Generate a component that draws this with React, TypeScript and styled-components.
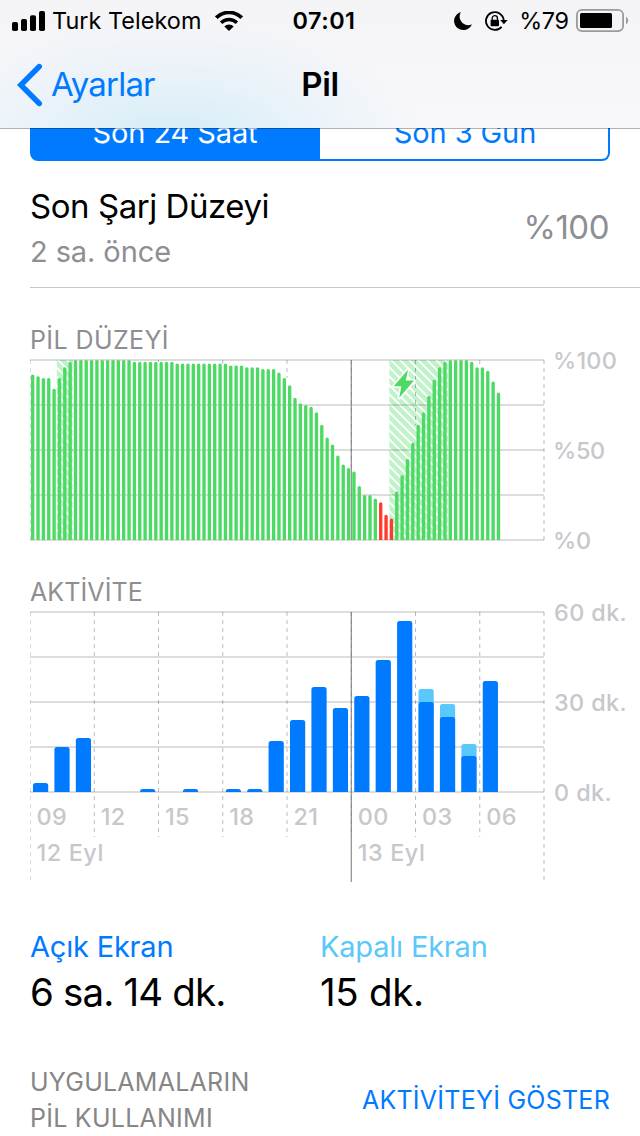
import React from "react";
import styled, { createGlobalStyle } from "styled-components";

const BLUE = "#007aff";
const SKY = "#5ac8fa";
const GREEN = "#4cd964";
const RED = "#ff3b30";

const GlobalStyle = createGlobalStyle`
  * { box-sizing: border-box; }
  body {
    margin: 0;
    background: #fff;
    font-family: Inter, "Liberation Sans", sans-serif;
    font-kerning: normal;
  }
`;

const Screen = styled.main`
  width: 640px;
  height: 1136px;
  overflow: hidden;
  background: #fff;
  color: #000;
`;

interface TextProps {
  $size: number;
  $line: number;
  $spacing?: number;
  $weight?: number;
  $color?: string;
}

const Text = styled.span<TextProps>`
  display: block;
  white-space: nowrap;
  font-size: ${(p) => p.$size}px;
  line-height: ${(p) => p.$line}px;
  letter-spacing: ${(p) => p.$spacing ?? 0}px;
  font-weight: ${(p) => p.$weight ?? 400};
  color: ${(p) => p.$color ?? "inherit"};
`;

const AxisLabel = styled.span<{ $spacing?: number }>`
  display: block;
  white-space: nowrap;
  font-size: 23.4px;
  line-height: 30px;
  font-weight: 500;
  letter-spacing: ${(p) => p.$spacing ?? 0.2}px;
  color: #c7c7cc;
`;

const Header = styled.header`
  position: relative;
  z-index: 1;
  height: 128px;
  background:
    radial-gradient(ellipse 260px 120px at 170px 140px, rgba(205, 234, 247, 0.85), rgba(220, 238, 249, 0.5) 55%, rgba(247, 247, 249, 0) 100%),
    linear-gradient(#f4f4f7, #f8f8fa);
  box-shadow: 0 1px 0 rgba(0, 0, 0, 0.3);
`;

const StatusBar = styled.div`
  display: grid;
  grid-template-columns: 1fr auto 1fr;
  align-items: center;
  height: 41px;
  padding: 0 11px 0 12px;
`;

const StatusGroup = styled.div<{ $end?: boolean }>`
  display: flex;
  align-items: center;
  justify-content: ${(p) => (p.$end ? "flex-end" : "flex-start")};
`;

const Clock = styled(Text)`
  padding-left: 7px;
`;

const Gap = styled.span<{ $w: number }>`
  flex: none;
  width: ${(p) => p.$w}px;
`;

const NavBar = styled.nav`
  display: grid;
  grid-template-columns: 1fr auto 1fr;
  align-items: center;
  height: 87px;
  padding: 0 17px;
`;

const BackButton = styled.a`
  display: flex;
  align-items: center;
  gap: 8px;
  color: ${BLUE};
`;

const Segments = styled.div`
  display: flex;
  align-items: flex-end;
  height: 33px;
  margin: 0 30px;
  overflow: hidden;
`;

const Segment = styled.button<{ $active?: boolean }>`
  flex: none;
  width: 290px;
  height: 58px;
  padding: 1px 0 0 ${(p) => (p.$active ? 0 : 2)}px;
  font: inherit;
  border: 2px solid ${BLUE};
  border-radius: ${(p) => (p.$active ? "8px 0 0 8px" : "0 8px 8px 0")};
  border-left-width: ${(p) => (p.$active ? 2 : 0)}px;
  background: ${(p) => (p.$active ? BLUE : "#fff")};
  color: ${(p) => (p.$active ? "#fff" : BLUE)};
  text-align: center;
`;

const ChargeRow = styled.section`
  display: flex;
  align-items: center;
  justify-content: space-between;
  height: 127px;
  margin-left: 30px;
  padding: 6px 31px 0 0;
  border-bottom: 1px solid #c8c7cc;
`;

const ChargeInfo = styled.div`
  padding-top: 3px;
`;

const ChartSection = styled.section<{ $top: number }>`
  padding: ${(p) => p.$top}px 0 0 30px;
`;

const ChartBody = styled.div`
  display: flex;
`;

const Chart = styled.svg`
  display: block;
  flex: none;
  margin-top: 4px;
  overflow: hidden;
`;

const Axis = styled.div<{ $left: number }>`
  display: flex;
  flex-direction: column;
  gap: 60px;
  margin: -9px 0 0 ${(p) => p.$left}px;
`;

const Hours = styled.div`
  display: grid;
  grid-template-columns: repeat(8, 64.25px);
  height: 36px;
  margin: -81px 0 0 6.5px;
`;

const Dates = styled.div`
  display: grid;
  grid-template-columns: 321.25px auto;
  height: 36px;
  margin-left: 6.5px;
`;

const Totals = styled.section`
  display: grid;
  grid-template-columns: 290px 290px;
  padding: 51px 30px 0;
`;

const Footer = styled.footer`
  display: flex;
  align-items: center;
  justify-content: space-between;
  padding: 48px 30px 0;
`;

const repeat = (value: number, count: number): number[] => Array(count).fill(value);

const batteryLevels: number[] = [
  92, 91, 90, 90, 84, 90, 96, 99,
  ...repeat(100, 11),
  ...repeat(99, 8),
  ...repeat(98, 10),
  97, 97, 97, 96, 96, 96, 95, 95, 95, 93, 90, 86, 79, 76, 75, 74, 71, 64, 57, 53,
  47, 42, 40, 38, 30, 25, 25, 23, 21, 14, 12, 27, 36, 45, 54, 64, 71, 80, 89, 96,
  99, 100, 100, 100, 100, 99, 96, 96, 94, 88, 82,
];

const activity: { hour: number; on: number; off?: number }[] = [
  { hour: 0, on: 3 },
  { hour: 1, on: 15 },
  { hour: 2, on: 18 },
  { hour: 5, on: 1 },
  { hour: 7, on: 1 },
  { hour: 9, on: 1 },
  { hour: 10, on: 1 },
  { hour: 11, on: 17 },
  { hour: 12, on: 24 },
  { hour: 13, on: 35 },
  { hour: 14, on: 28 },
  { hour: 15, on: 32 },
  { hour: 16, on: 44 },
  { hour: 17, on: 57 },
  { hour: 18, on: 30, off: 4.3 },
  { hour: 19, on: 25, off: 4.3 },
  { hour: 20, on: 12, off: 4 },
  { hour: 21, on: 37 },
];

const HOUR = 514 / 24;
const QUARTER = HOUR / 4;
const GRID = "rgba(0,0,0,0.27)";

const topRounded = (x: number, y: number, w: number, bottom: number, r: number) => {
  const k = Math.min(r, bottom - y, w / 2);
  return `M${x} ${bottom}V${y + k}a${k} ${k} 0 0 1 ${k} ${-k}h${w - 2 * k}a${k} ${k} 0 0 1 ${k} ${k}V${bottom}z`;
};

function Grid({ lineEnds, midnightEnd }: { lineEnds: number[]; midnightEnd: number }) {
  return (
    <g stroke={GRID} strokeWidth={1}>
      {[1, 46, 91, 136, 181].map((y) => (
        <line key={y} x1={0} x2={514} y1={y} y2={y} />
      ))}
      {lineEnds.map((end, i) => (
        <line key={i} x1={i * 3 * HOUR} x2={i * 3 * HOUR} y1={1} y2={end} strokeDasharray="4 4" />
      ))}
      <line x1={15 * HOUR} x2={15 * HOUR} y1={1} y2={midnightEnd} stroke="#777" />
    </g>
  );
}

function BatteryChart() {
  return (
    <Chart width={515} height={182} viewBox="0 0 515 182">
      <defs>
        <pattern id="hatch" width="9" height="9" patternUnits="userSpaceOnUse">
          <rect width="9" height="9" fill="#c0f3c9" />
          <path d="M-4.5 -4.5L13.5 13.5M-4.5 4.5L4.5 13.5M4.5 -4.5L13.5 4.5" stroke="#fff" strokeWidth={1.9} />
        </pattern>
      </defs>
      <rect x={5 * QUARTER} y={1} width={3 * QUARTER} height={180} fill="url(#hatch)" />
      <rect x={67 * QUARTER + 0.6} y={1} width={11 * QUARTER} height={180} fill="url(#hatch)" />
      <Grid lineEnds={[181, 1, 3, 5, 19, 110, 66, 6, 181]} midnightEnd={181} />
      {batteryLevels.map((level, i) => (
        <path
          key={i}
          d={topRounded(i * QUARTER + 1, 181 - level * 1.8, QUARTER - 2, 181, 1.6)}
          fill={i >= 65 && i <= 67 ? RED : GREEN}
        />
      ))}
      <path
        d="M378 10.5L363.8 27.3H371.3L369.3 38.8L384 21.6H375.8z"
        fill={GREEN}
        stroke="#fff"
        strokeWidth={3.4}
        strokeLinejoin="round"
        paintOrder="stroke"
      />
    </Chart>
  );
}

function ActivityChart() {
  return (
    <Chart width={515} height={272} viewBox="0 0 515 272">
      <Grid lineEnds={[270, 226, 226, 226, 226, 226, 226, 226, 270]} midnightEnd={271} />
      {activity.map(({ hour, on, off }) => {
        const x = hour * HOUR + 3;
        return (
          <g key={hour}>
            {off && <path d={topRounded(x, 181 - (on + off) * 3, HOUR - 6.2, 181, 2.5)} fill={SKY} />}
            <path d={topRounded(x, 181 - on * 3, HOUR - 6.2, 181, 2.5)} fill={BLUE} />
          </g>
        );
      })}
    </Chart>
  );
}

const SignalIcon = () => (
  <svg width="33" height="20" viewBox="0 0 33 20">
    <rect x="0" y="11" width="6" height="9" rx="1.8" />
    <rect x="9" y="8" width="6" height="12" rx="1.8" />
    <rect x="18" y="4.3" width="6" height="15.7" rx="1.8" />
    <rect x="27" y="0" width="6" height="20" rx="1.8" />
  </svg>
);

const WifiIcon = () => (
  <svg width="28" height="20" viewBox="0 0 28 20">
    <path d="M14 20L9.3 15.4A6.7 6.7 0 0 1 18.7 15.4z" />
    <path d="M6.1 11.8A11 11 0 0 1 21.9 11.8" fill="none" stroke="#000" strokeWidth="3.4" />
    <path d="M1.3 6.7A18 18 0 0 1 26.7 6.7" fill="none" stroke="#000" strokeWidth="3.8" />
  </svg>
);

const MoonIcon = () => (
  <svg width="18" height="18" viewBox="0 0 18 18">
    <path d="M6.8 0C1.9 2 -0.6 6.4 0.3 10.8C1.3 15.2 4.8 18 9.3 18C13.1 18 16.4 15.9 17.9 12.2C14.6 13.9 11 13.3 8.3 10.8C5.4 8 4.8 3.8 6.8 0z" />
  </svg>
);

const RotationLockIcon = () => (
  <svg width="23" height="20" viewBox="0 0 23 20">
    <path d="M18.7 9A8.9 8.9 0 1 0 16.6 15.8" fill="none" stroke="#000" strokeWidth="1.8" />
    <path d="M15.2 9H22.600L18.900 13.300z" />
    <rect x="5.6" y="8.800" width="8.400" height="6.400" rx="0.9" />
    <path d="M7.2 9.200V7.200a2.600 2.600 0 0 1 5.200 0V9.200" fill="none" stroke="#000" strokeWidth="1.3" />
  </svg>
);

const BatteryIcon = () => (
  <svg width="53" height="23" viewBox="0 0 53 23">
    <rect x="0.9" y="0.9" width="46.2" height="21.2" rx="5" fill="none" stroke="#9a9a9c" strokeWidth="1.8" />
    <rect x="4" y="4" width="32" height="15" rx="1.5" />
    <path d="M50 7.8a4.2 4.2 0 0 1 0 7.4z" fill="#9a9a9c" />
  </svg>
);

const BackChevron = () => (
  <svg width="26" height="44" viewBox="0 0 26 44">
    <path d="M22.3 3.5L3.8 22L22.3 40.5" fill="none" stroke={BLUE} strokeWidth="5.4" strokeLinecap="round" />
  </svg>
);

export default function App() {
  return (
    <Screen>
      <GlobalStyle />
      <Header>
        <StatusBar>
          <StatusGroup>
            <SignalIcon />
            <Gap $w={7} />
            <Text $size={23.4} $line={41} $spacing={0.05}>Turk Telekom</Text>
            <Gap $w={14} />
            <WifiIcon />
          </StatusGroup>
          <Clock $size={23.4} $line={41} $weight={600} $spacing={0.5}>07:01</Clock>
          <StatusGroup $end>
            <MoonIcon />
            <Gap $w={13} />
            <RotationLockIcon />
            <Gap $w={11.5} />
            <Text $size={23.4} $line={41} $spacing={-0.4}>%79</Text>
            <Gap $w={7.5} />
            <BatteryIcon />
          </StatusGroup>
        </StatusBar>
        <NavBar>
          <BackButton>
            <BackChevron />
            <Text $size={33} $line={87} $spacing={-0.8}>Ayarlar</Text>
          </BackButton>
          <Text $size={33} $line={87} $weight={600} $spacing={-0.4}>Pil</Text>
        </NavBar>
      </Header>

      <Segments>
        <Segment $active>
          <Text $size={29} $line={54} $spacing={-0.1}>Son 24 Saat</Text>
        </Segment>
        <Segment>
          <Text $size={29} $line={54} $spacing={-0.1}>Son 3 Gün</Text>
        </Segment>
      </Segments>

      <ChargeRow>
        <ChargeInfo>
          <Text $size={33} $line={46} $spacing={-0.45}>Son Şarj Düzeyi</Text>
          <Text $size={29} $line={45} $color="#8e8e93" $spacing={-0.1}>2 sa. önce</Text>
        </ChargeInfo>
        <Text $size={33} $line={46} $color="#8e8e93" $spacing={-0.5}>%100</Text>
      </ChargeRow>

      <ChartSection $top={37}>
        <Text $size={25} $line={30} $color="#8e8e93" $spacing={0.4}>PİL DÜZEYİ</Text>
        <ChartBody>
          <BatteryChart />
          <Axis $left={8}>
            <AxisLabel>%100</AxisLabel>
            <AxisLabel $spacing={-0.3}>%50</AxisLabel>
            <AxisLabel $spacing={-0.3}>%0</AxisLabel>
          </Axis>
        </ChartBody>
      </ChartSection>

      <ChartSection $top={21}>
        <Text $size={25} $line={30} $color="#8e8e93" $spacing={0.1}>AKTİVİTE</Text>
        <ChartBody>
          <ActivityChart />
          <Axis $left={9}>
            <AxisLabel $spacing={0.4}>60 dk.</AxisLabel>
            <AxisLabel $spacing={0.4}>30 dk.</AxisLabel>
            <AxisLabel $spacing={0.4}>0 dk.</AxisLabel>
          </Axis>
        </ChartBody>
        <Hours>
          {["09", "12", "15", "18", "21", "00", "03", "06"].map((hour) => (
            <AxisLabel key={hour} $spacing={0.4}>{hour}</AxisLabel>
          ))}
        </Hours>
        <Dates>
          <AxisLabel $spacing={0.6}>12 Eyl</AxisLabel>
          <AxisLabel $spacing={0.6}>13 Eyl</AxisLabel>
        </Dates>
      </ChartSection>

      <Totals>
        <div>
          <Text $size={29} $line={44} $spacing={-0.2} $color={BLUE}>Açık Ekran</Text>
          <Text $size={38.5} $line={47} $spacing={-0.85}>6 sa. 14 dk.</Text>
        </div>
        <div>
          <Text $size={29} $line={44} $spacing={-0.2} $color={SKY}>Kapalı Ekran</Text>
          <Text $size={38.5} $line={47} $spacing={-0.3}>15 dk.</Text>
        </div>
      </Totals>

      <Footer>
        <div>
          <Text $size={25} $line={36} $spacing={0.25} $color="#868686">UYGULAMALARIN</Text>
          <Text $size={25} $line={36} $spacing={0.25} $color="#868686">PİL KULLANIMI</Text>
        </div>
        <Text $size={25} $line={36} $spacing={0.25} $color={BLUE}>AKTİVİTEYİ GÖSTER</Text>
      </Footer>
    </Screen>
  );
}
